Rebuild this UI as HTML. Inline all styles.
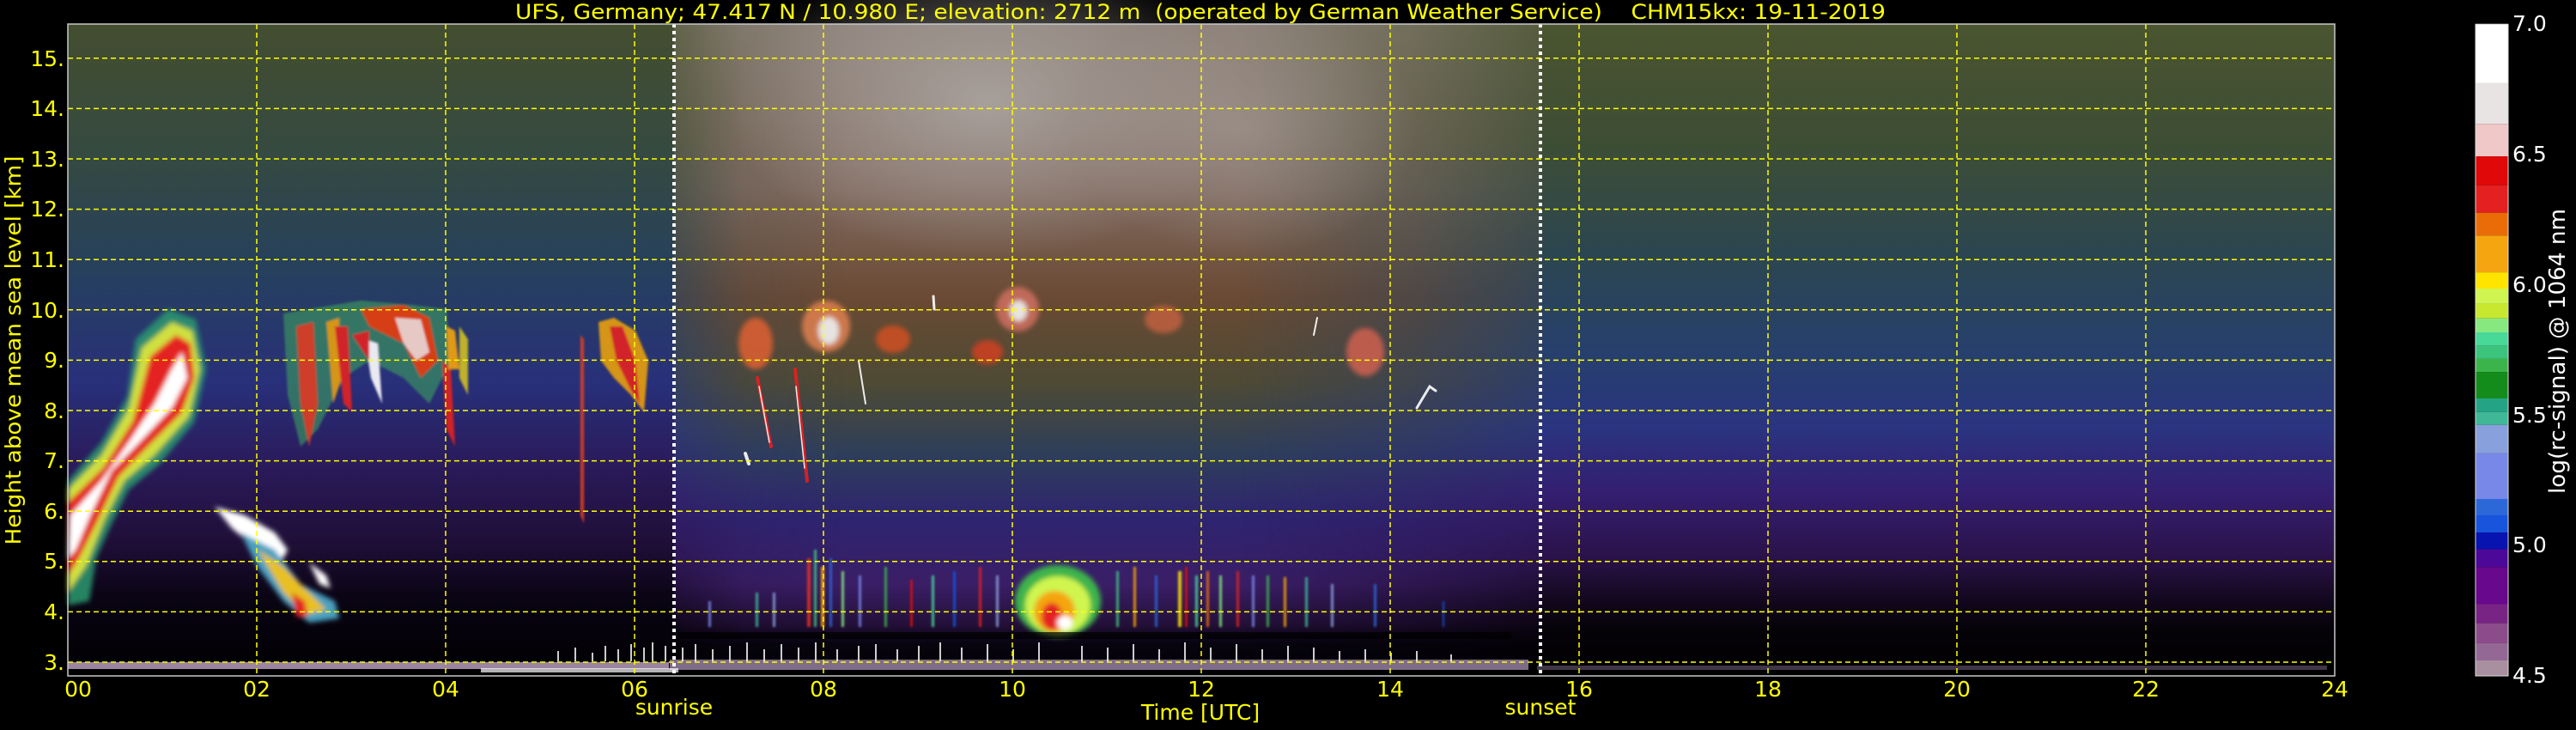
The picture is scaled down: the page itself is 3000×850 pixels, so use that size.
<!DOCTYPE html>
<html><head><meta charset="utf-8"><style>
html,body{margin:0;padding:0;background:#000;width:3000px;height:850px;overflow:hidden}
svg{display:block}
text{font-family:"DejaVu Sans","Liberation Sans",sans-serif}
</style></head><body>
<svg width="3000" height="850" viewBox="0 0 3000 850" xmlns="http://www.w3.org/2000/svg">
<defs>
<linearGradient id="bgV" x1="0" y1="28" x2="0" y2="787" gradientUnits="userSpaceOnUse">
<stop offset="0" stop-color="#4a5430"/>
<stop offset="0.18" stop-color="#3e4e34"/>
<stop offset="0.35" stop-color="#2c4650"/>
<stop offset="0.5" stop-color="#27406c"/>
<stop offset="0.62" stop-color="#2a3480"/>
<stop offset="0.72" stop-color="#341e70"/>
<stop offset="0.82" stop-color="#2a1248"/>
<stop offset="0.88" stop-color="#140820"/>
<stop offset="0.93" stop-color="#050208"/>
<stop offset="1" stop-color="#000"/>
</linearGradient>
<linearGradient id="bgL" x1="0" y1="28" x2="0" y2="787" gradientUnits="userSpaceOnUse">
<stop offset="0" stop-color="#444e30"/>
<stop offset="0.2" stop-color="#354a40"/>
<stop offset="0.38" stop-color="#26405e"/>
<stop offset="0.55" stop-color="#28307a"/>
<stop offset="0.68" stop-color="#2a1a5a"/>
<stop offset="0.8" stop-color="#1e0e36"/>
<stop offset="0.88" stop-color="#0a0414"/>
<stop offset="1" stop-color="#000"/>
</linearGradient>
<linearGradient id="midV" x1="0" y1="28" x2="0" y2="787" gradientUnits="userSpaceOnUse">
<stop offset="0" stop-color="#8c8078"/>
<stop offset="0.25" stop-color="#806a60"/>
<stop offset="0.42" stop-color="#6a4a34"/>
<stop offset="0.55" stop-color="#4e4a34"/>
<stop offset="0.66" stop-color="#2e3e5a"/>
<stop offset="0.76" stop-color="#2e2470"/>
<stop offset="0.86" stop-color="#3a1e66"/>
<stop offset="0.92" stop-color="#24103a"/>
<stop offset="0.95" stop-color="#080410"/>
<stop offset="1" stop-color="#000"/>
</linearGradient>
<linearGradient id="midH" x1="785" y1="0" x2="1794" y2="0" gradientUnits="userSpaceOnUse">
<stop offset="0" stop-color="#fff" stop-opacity="0.35"/>
<stop offset="0.08" stop-color="#fff" stop-opacity="0.85"/>
<stop offset="0.2" stop-color="#fff" stop-opacity="1"/>
<stop offset="0.65" stop-color="#fff" stop-opacity="1"/>
<stop offset="0.85" stop-color="#fff" stop-opacity="0.6"/>
<stop offset="1" stop-color="#fff" stop-opacity="0.2"/>
</linearGradient>
<mask id="midMask"><rect x="785" y="28" width="1010" height="760" fill="url(#midH)"/></mask>
<radialGradient id="white" cx="0.5" cy="0.5" r="0.5">
<stop offset="0" stop-color="#b0aaa6" stop-opacity="0.8"/>
<stop offset="1" stop-color="#b0aaa6" stop-opacity="0"/>
</radialGradient>
<filter id="bl"><feGaussianBlur stdDeviation="3"/></filter>
<filter id="bl2"><feGaussianBlur stdDeviation="1.2"/></filter>
</defs>

<rect x="79" y="28" width="2640" height="759" fill="url(#bgV)"/>
<rect x="79" y="28" width="706" height="759" fill="url(#bgL)"/>
<rect x="785" y="28" width="1010" height="759" fill="url(#midV)" mask="url(#midMask)"/>
<ellipse cx="1150" cy="120" rx="300" ry="180" fill="url(#white)"/>
<ellipse cx="1450" cy="150" rx="200" ry="150" fill="url(#white)" opacity="0.6"/>

<g filter="url(#bl2)" opacity="0.85">
<rect x="940" y="650" width="4" height="80" fill="#e83020"/>
<rect x="948" y="640" width="3" height="90" fill="#40c880"/>
<rect x="956" y="660" width="4" height="70" fill="#f5a510"/>
<rect x="966" y="650" width="3" height="80" fill="#2c68d8"/>
<rect x="980" y="665" width="3" height="65" fill="#88e880"/>
<rect x="1000" y="670" width="3" height="60" fill="#7888e8"/>
<rect x="1030" y="660" width="3" height="70" fill="#3cb44c"/>
<rect x="1060" y="675" width="3" height="55" fill="#e00808"/>
<rect x="1085" y="670" width="3" height="60" fill="#48d898"/>
<rect x="1110" y="665" width="3" height="65" fill="#1854dc"/>
<rect x="1140" y="660" width="3" height="70" fill="#e42020"/>
<rect x="1160" y="670" width="3" height="60" fill="#88a0dc"/>
<rect x="1300" y="665" width="3" height="65" fill="#3cc47c"/>
<rect x="1320" y="660" width="3" height="70" fill="#f5a510"/>
<rect x="1345" y="670" width="3" height="60" fill="#2c68d8"/>
<rect x="1372" y="665" width="4" height="65" fill="#ffe400"/>
<rect x="1380" y="660" width="3" height="70" fill="#e00808"/>
<rect x="1392" y="670" width="3" height="60" fill="#48d898"/>
<rect x="1405" y="665" width="3" height="65" fill="#ea6c08"/>
<rect x="1420" y="670" width="3" height="60" fill="#88e880"/>
<rect x="1440" y="665" width="3" height="65" fill="#e42020"/>
<rect x="1458" y="670" width="3" height="60" fill="#7888e8"/>
<rect x="1475" y="670" width="3" height="60" fill="#3cb44c"/>
<rect x="1495" y="672" width="3" height="58" fill="#f5a510"/>
<rect x="1520" y="672" width="3" height="58" fill="#40b898"/>
<rect x="1550" y="680" width="3" height="50" fill="#88a0dc"/>
<rect x="1600" y="680" width="3" height="50" fill="#2c68d8"/>
<rect x="1680" y="700" width="2" height="30" fill="#1854dc"/>
<rect x="880" y="690" width="3" height="40" fill="#40b898"/>
<rect x="900" y="690" width="3" height="40" fill="#88a0dc"/>
<rect x="825" y="700" width="3" height="30" fill="#7888e8"/>
</g>
<g filter="url(#bl)">
<ellipse cx="1232" cy="700" rx="50" ry="42" fill="#3cb44c"/>
<ellipse cx="1232" cy="705" rx="38" ry="34" fill="#d0f550"/>
<ellipse cx="1228" cy="712" rx="24" ry="24" fill="#f5a510"/>
<ellipse cx="1225" cy="718" rx="12" ry="16" fill="#e42020"/>
<ellipse cx="1240" cy="725" rx="9" ry="8" fill="#fff"/>
</g>
<rect x="790" y="736" width="970" height="8" fill="#000" opacity="0.7"/>
<rect x="79" y="771" width="700" height="8" fill="#9a84a0"/>
<rect x="780" y="768" width="1000" height="12" fill="#8c7898" opacity="0.9"/>
<rect x="1790" y="775" width="920" height="5" fill="#6a5a78" opacity="0.6"/>
<rect x="560" y="778" width="230" height="5" fill="#ffffff" opacity="0.7"/>
<g stroke="#fff" stroke-width="2" opacity="0.8">
<path d="M650 770v-12M670 770v-16M690 770v-10M705 770v-18M720 770v-14M735 770v-20M750 770v-16M760 770v-22M775 770v-18M795 770v-16M810 770v-20M830 770v-14M850 770v-18M870 770v-22M890 770v-14M910 770v-20M930 770v-16M950 770v-22M975 770v-14M1000 770v-18M1020 770v-20M1045 770v-14M1070 770v-18M1095 770v-22M1120 770v-16M1150 770v-20M1180 770v-14M1210 770v-22M1260 770v-18M1290 770v-16M1320 770v-20M1350 770v-14M1380 770v-22M1410 770v-16M1440 770v-20M1470 770v-14M1500 770v-18M1530 770v-16M1560 770v-12M1590 770v-14M1620 770v-10M1650 770v-12M1690 770v-8"/>
</g>

<g filter="url(#bl)">
<path d="M79 705 L79 560 L118 515 L148 462 L158 395 L196 360 L228 372 L240 430 L226 492 L186 540 L150 570 L130 610 L112 650 L104 700 Z" fill="#2c9a70" opacity="0.85"/>
<path d="M79 690 L79 570 L118 530 L150 475 L165 405 L200 375 L224 385 L233 430 L220 485 L180 530 L145 560 L122 605 L100 660 Z" fill="#d0e040"/>
<path d="M79 670 L79 585 L120 545 L155 490 L175 415 L205 390 L222 400 L226 440 L212 480 L172 520 L138 555 L112 610 L92 650 Z" fill="#e42020"/>
<path d="M79 650 L82 600 L118 560 L150 515 L180 470 L200 430 L212 410 L218 440 L200 475 L165 512 L130 548 L105 600 L88 640 Z" fill="#fff"/>
<path d="M250 590 L285 600 L320 620 L335 640 L330 650 L300 640 L270 615 Z" fill="#fff"/>
<path d="M280 620 L320 640 L350 680 L390 700 L395 720 L360 725 L330 700 L300 660 Z" fill="#4aa0c0"/>
<path d="M300 640 L330 660 L360 690 L380 710 L355 715 L330 690 Z" fill="#e8c020"/>
<path d="M340 690 L355 700 L358 718 L345 718 Z" fill="#e42020"/>
<path d="M360 655 L380 670 L385 685 L372 680 Z" fill="#fff"/>
</g>
<g filter="url(#bl2)" opacity="0.9">
<path d="M330 365 L420 350 L480 355 L520 360 L525 420 L500 470 L470 440 L430 420 L400 440 L370 500 L350 520 L335 460 Z" fill="#3c9a60" opacity="0.7"/>
<path d="M345 380 L365 375 L370 470 L360 520 L350 470 Z" fill="#e04020"/>
<path d="M380 375 L395 370 L398 440 L388 470 Z" fill="#e8a010"/>
<path d="M390 380 L405 380 L410 480 L400 470 Z" fill="#e42020"/>
<path d="M425 395 L440 400 L445 470 L432 440 Z" fill="#fff"/>
<path d="M410 390 L430 385 L430 420 Z" fill="#e42020"/>
<path d="M420 360 L470 355 L500 370 L510 420 L490 440 L470 400 L450 390 L430 380 Z" fill="#ea4010"/>
<path d="M460 370 L490 372 L500 410 L485 420 L470 400 Z" fill="#fff" opacity="0.8"/>
<path d="M515 420 L525 430 L530 520 L520 500 Z" fill="#e42020"/>
<path d="M520 380 L530 385 L535 430 L522 430 Z" fill="#f5a510"/>
<path d="M535 380 L545 395 L545 460 L535 440 Z" fill="#d0c020"/>
<path d="M697 375 L715 370 L740 385 L755 420 L750 480 L735 460 L715 440 L700 420 Z" fill="#e8a010"/>
<path d="M710 380 L725 380 L740 420 L745 470 L735 455 L718 420 Z" fill="#e42020"/>
<path d="M676 390 L680 395 L680 610 L676 600 Z" fill="#e04020"/>
</g>
<g filter="url(#bl)" opacity="0.85">
<ellipse cx="880" cy="400" rx="20" ry="30" fill="#e06030"/>
<ellipse cx="962" cy="380" rx="28" ry="30" fill="#e08050"/>
<ellipse cx="965" cy="385" rx="12" ry="16" fill="#fff"/>
<ellipse cx="1185" cy="360" rx="25" ry="26" fill="#d07060"/>
<ellipse cx="1186" cy="362" rx="10" ry="12" fill="#fff"/>
<ellipse cx="1040" cy="395" rx="20" ry="16" fill="#d05020"/>
<ellipse cx="1355" cy="372" rx="22" ry="16" fill="#c06040"/>
<ellipse cx="1590" cy="410" rx="22" ry="28" fill="#d06050"/>
<ellipse cx="1150" cy="410" rx="18" ry="14" fill="#d04020"/>
</g>
<g stroke-linecap="round" opacity="0.9">
<path d="M882 440 L898 520" stroke="#e42020" stroke-width="4"/>
<path d="M884 450 L896 515" stroke="#fff" stroke-width="1.5"/>
<path d="M926 430 L940 560" stroke="#e42020" stroke-width="4"/>
<path d="M927 450 L937 545" stroke="#fff" stroke-width="1.5"/>
<path d="M868 528 L872 540" stroke="#fff" stroke-width="4"/>
<path d="M1000 420 L1008 470" stroke="#fff" stroke-width="2"/>
<path d="M1650 475 L1665 450 L1672 455" stroke="#fff" stroke-width="3" fill="none"/>
<path d="M1530 390 L1534 370" stroke="#fff" stroke-width="2"/>
<path d="M1087 345 L1088 360" stroke="#fff" stroke-width="3"/>
</g>

<g stroke="#ffff00" stroke-width="1.5" stroke-dasharray="6,4" fill="none">
<path d="M299 28V787M519 28V787M739 28V787M959 28V787M1179 28V787M1399 28V787M1619 28V787M1839 28V787M2059 28V787M2279 28V787M2499 28V787"/>
<path d="M79 771H2719M79 712.4H2719M79 653.8H2719M79 595.2H2719M79 536.6H2719M79 478H2719M79 419.4H2719M79 360.8H2719M79 302.2H2719M79 243.6H2719M79 185H2719M79 126.4H2719M79 67.8H2719"/>
</g>
<g stroke="#fff" stroke-width="4" stroke-dasharray="4,4">
<path d="M785 28V787M1794 28V787"/>
</g>
<rect x="79" y="28" width="2640" height="759" fill="none" stroke="#c8c8c8" stroke-width="1.5"/>

<g fill="#ffff00" font-size="25" text-anchor="end">
<text x="75" y="77">15.</text><text x="75" y="135">14.</text><text x="75" y="194">13.</text>
<text x="75" y="252">12.</text><text x="75" y="311">11.</text><text x="75" y="370">10.</text>
<text x="75" y="428">9.</text><text x="75" y="487">8.</text><text x="75" y="545">7.</text>
<text x="75" y="604">6.</text><text x="75" y="662">5.</text><text x="75" y="721">4.</text>
<text x="75" y="780">3.</text>
</g>
<text transform="translate(24,408) rotate(-90)" fill="#ffff00" font-size="25" text-anchor="middle" textLength="453" lengthAdjust="spacingAndGlyphs">Height above mean sea level [km]</text>
<g fill="#ffff00" font-size="25" text-anchor="middle">
<text x="91" y="811">00</text><text x="299" y="811">02</text><text x="519" y="811">04</text>
<text x="739" y="811">06</text><text x="959" y="811">08</text><text x="1179" y="811">10</text>
<text x="1399" y="811">12</text><text x="1619" y="811">14</text><text x="1839" y="811">16</text>
<text x="2059" y="811">18</text><text x="2279" y="811">20</text><text x="2499" y="811">22</text>
<text x="2719" y="811">24</text>
<text x="785" y="832">sunrise</text>
<text x="1794" y="832">sunset</text>
<text x="1398" y="838">Time [UTC]</text>
</g>
<text x="1398" y="22" fill="#ffff00" font-size="24" text-anchor="middle" textLength="1596" lengthAdjust="spacingAndGlyphs" xml:space="preserve">UFS, Germany; 47.417 N / 10.980 E; elevation: 2712 m  (operated by German Weather Service)    CHM15kx: 19-11-2019</text>

<g>
<rect x="2883" y="28.2" width="38" height="68.3" fill="#ffffff"/>
<rect x="2883" y="96.5" width="38" height="47.7" fill="#e8e4e4"/>
<rect x="2883" y="144.2" width="38" height="37.9" fill="#f0c8c8"/>
<rect x="2883" y="182.1" width="38" height="33.6" fill="#e00808"/>
<rect x="2883" y="215.7" width="38" height="32" fill="#e42020"/>
<rect x="2883" y="247.7" width="38" height="26.6" fill="#ea6c08"/>
<rect x="2883" y="274.3" width="38" height="42.8" fill="#f5a510"/>
<rect x="2883" y="317.1" width="38" height="18.9" fill="#ffe400"/>
<rect x="2883" y="336" width="38" height="17.9" fill="#d0f550"/>
<rect x="2883" y="353.9" width="38" height="16.8" fill="#c8e830"/>
<rect x="2883" y="370.7" width="38" height="16.3" fill="#88e880"/>
<rect x="2883" y="387" width="38" height="15.7" fill="#48d898"/>
<rect x="2883" y="402.7" width="38" height="15.2" fill="#3cc47c"/>
<rect x="2883" y="417.9" width="38" height="15.2" fill="#3cb44c"/>
<rect x="2883" y="433.1" width="38" height="30.9" fill="#148c1c"/>
<rect x="2883" y="464" width="38" height="15.7" fill="#24a484"/>
<rect x="2883" y="479.7" width="38" height="15.1" fill="#40b898"/>
<rect x="2883" y="494.8" width="38" height="33.1" fill="#88a0dc"/>
<rect x="2883" y="527.9" width="38" height="53.1" fill="#7888e8"/>
<rect x="2883" y="581" width="38" height="19" fill="#2c68d8"/>
<rect x="2883" y="600" width="38" height="20.1" fill="#1854dc"/>
<rect x="2883" y="620.1" width="38" height="19.5" fill="#0814b0"/>
<rect x="2883" y="639.6" width="38" height="20.6" fill="#4c0898"/>
<rect x="2883" y="660.2" width="38" height="43.3" fill="#68088c"/>
<rect x="2883" y="703.5" width="38" height="22.2" fill="#782484"/>
<rect x="2883" y="725.7" width="38" height="23.2" fill="#8c4c8c"/>
<rect x="2883" y="748.9" width="38" height="20.1" fill="#946894"/>
<rect x="2883" y="769" width="38" height="18" fill="#a890a0"/>
<rect x="2883" y="28.2" width="38" height="758.8" fill="none" stroke="#ddd" stroke-width="1"/>
</g>
<g fill="#fff" font-size="25">
<text x="2926" y="36">7.0</text>
<text x="2926" y="188">6.5</text>
<text x="2926" y="340">6.0</text>
<text x="2926" y="492">5.5</text>
<text x="2926" y="643">5.0</text>
<text x="2926" y="795">4.5</text>
</g>
<text transform="translate(2987,409) rotate(-90)" fill="#fff" font-size="26" text-anchor="middle" textLength="332" lengthAdjust="spacingAndGlyphs">log(rc-signal) @ 1064 nm</text>
</svg>
</body></html>
